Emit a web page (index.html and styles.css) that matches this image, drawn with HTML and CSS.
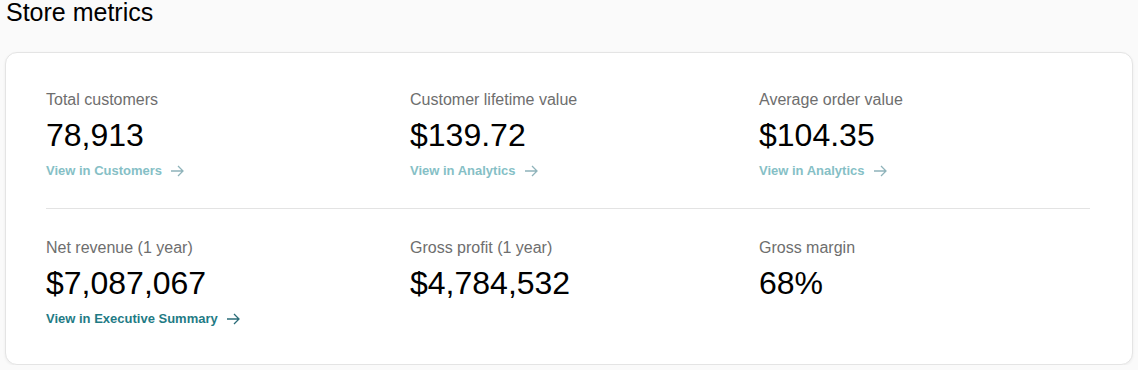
FILE: index.html
```html
<!DOCTYPE html>
<html lang="en">
<head>
    <meta charset="UTF-8">
    <meta name="viewport" content="width=device-width, initial-scale=1.0">
    <title>Store metrics</title>
    <link rel="stylesheet" href="styles.css">
</head>
<body>
    <h1>Store metrics</h1>
    <div class="card">
        <div class="row">
            <div class="metric">
                <p class="label">Total customers</p>
                <p class="value">78,913</p>
                <a class="link" href="#">View in Customers
                    <svg width="14" height="12" viewBox="0 0 14 12"><path d="M1 6H13M8 1L13 6L8 11" /></svg>
                </a>
            </div>
            <div class="metric">
                <p class="label">Customer lifetime value</p>
                <p class="value">$139.72</p>
                <a class="link" href="#">View in Analytics
                    <svg width="14" height="12" viewBox="0 0 14 12"><path d="M1 6H13M8 1L13 6L8 11" /></svg>
                </a>
            </div>
            <div class="metric">
                <p class="label">Average order value</p>
                <p class="value">$104.35</p>
                <a class="link" href="#">View in Analytics
                    <svg width="14" height="12" viewBox="0 0 14 12"><path d="M1 6H13M8 1L13 6L8 11" /></svg>
                </a>
            </div>
        </div>
        <div class="row">
            <div class="metric">
                <p class="label">Net revenue (1 year)</p>
                <p class="value">$7,087,067</p>
                <a class="link dark" href="#">View in Executive Summary
                    <svg width="14" height="12" viewBox="0 0 14 12"><path d="M1 6H13M8 1L13 6L8 11" /></svg>
                </a>
            </div>
            <div class="metric">
                <p class="label">Gross profit (1 year)</p>
                <p class="value">$4,784,532</p>
            </div>
            <div class="metric">
                <p class="label">Gross margin</p>
                <p class="value">68%</p>
            </div>
        </div>
    </div>
</body>
</html>
```

FILE: styles.css
```css
body {
    font-family: 'Liberation Sans', Arial, sans-serif;
    margin: 0;
    padding: 0 5px;
    background-color: #fafafa;
    color: #000;
}
h1 {
    font-size: 25px;
    line-height: 24px;
    font-weight: normal;
    margin: 0 0 28px 1px;
}
.card {
    background-color: #fff;
    border: 1px solid #e4e4e4;
    border-radius: 12px;
    box-shadow: 0 1px 3px rgba(0, 0, 0, 0.06);
    padding: 37px 42px 37px 40px;
}
.row {
    display: grid;
    grid-template-columns: 364px 349px 1fr;
}
.row:first-child {
    padding-bottom: 29px;
    border-bottom: 1px solid #e3e3e3;
}
.row + .row {
    padding-top: 29px;
}
.metric p {
    margin: 0;
}
.label {
    font-size: 16px;
    line-height: 20px;
    color: #6e6e6e;
}
.value {
    font-size: 32px;
    line-height: 40px;
    margin-top: 5px !important;
}
.link {
    display: flex;
    align-items: center;
    gap: 8px;
    margin-top: 8px;
    font-size: 13px;
    line-height: 16px;
    font-weight: bold;
    color: #86bfc6;
    text-decoration: none;
}
.link svg {
    fill: none;
    stroke: #8fb3ba;
    stroke-width: 1.3;
}
.link.dark {
    color: #1f7b85;
}
.link.dark svg {
    stroke: #2b6c78;
}
```
